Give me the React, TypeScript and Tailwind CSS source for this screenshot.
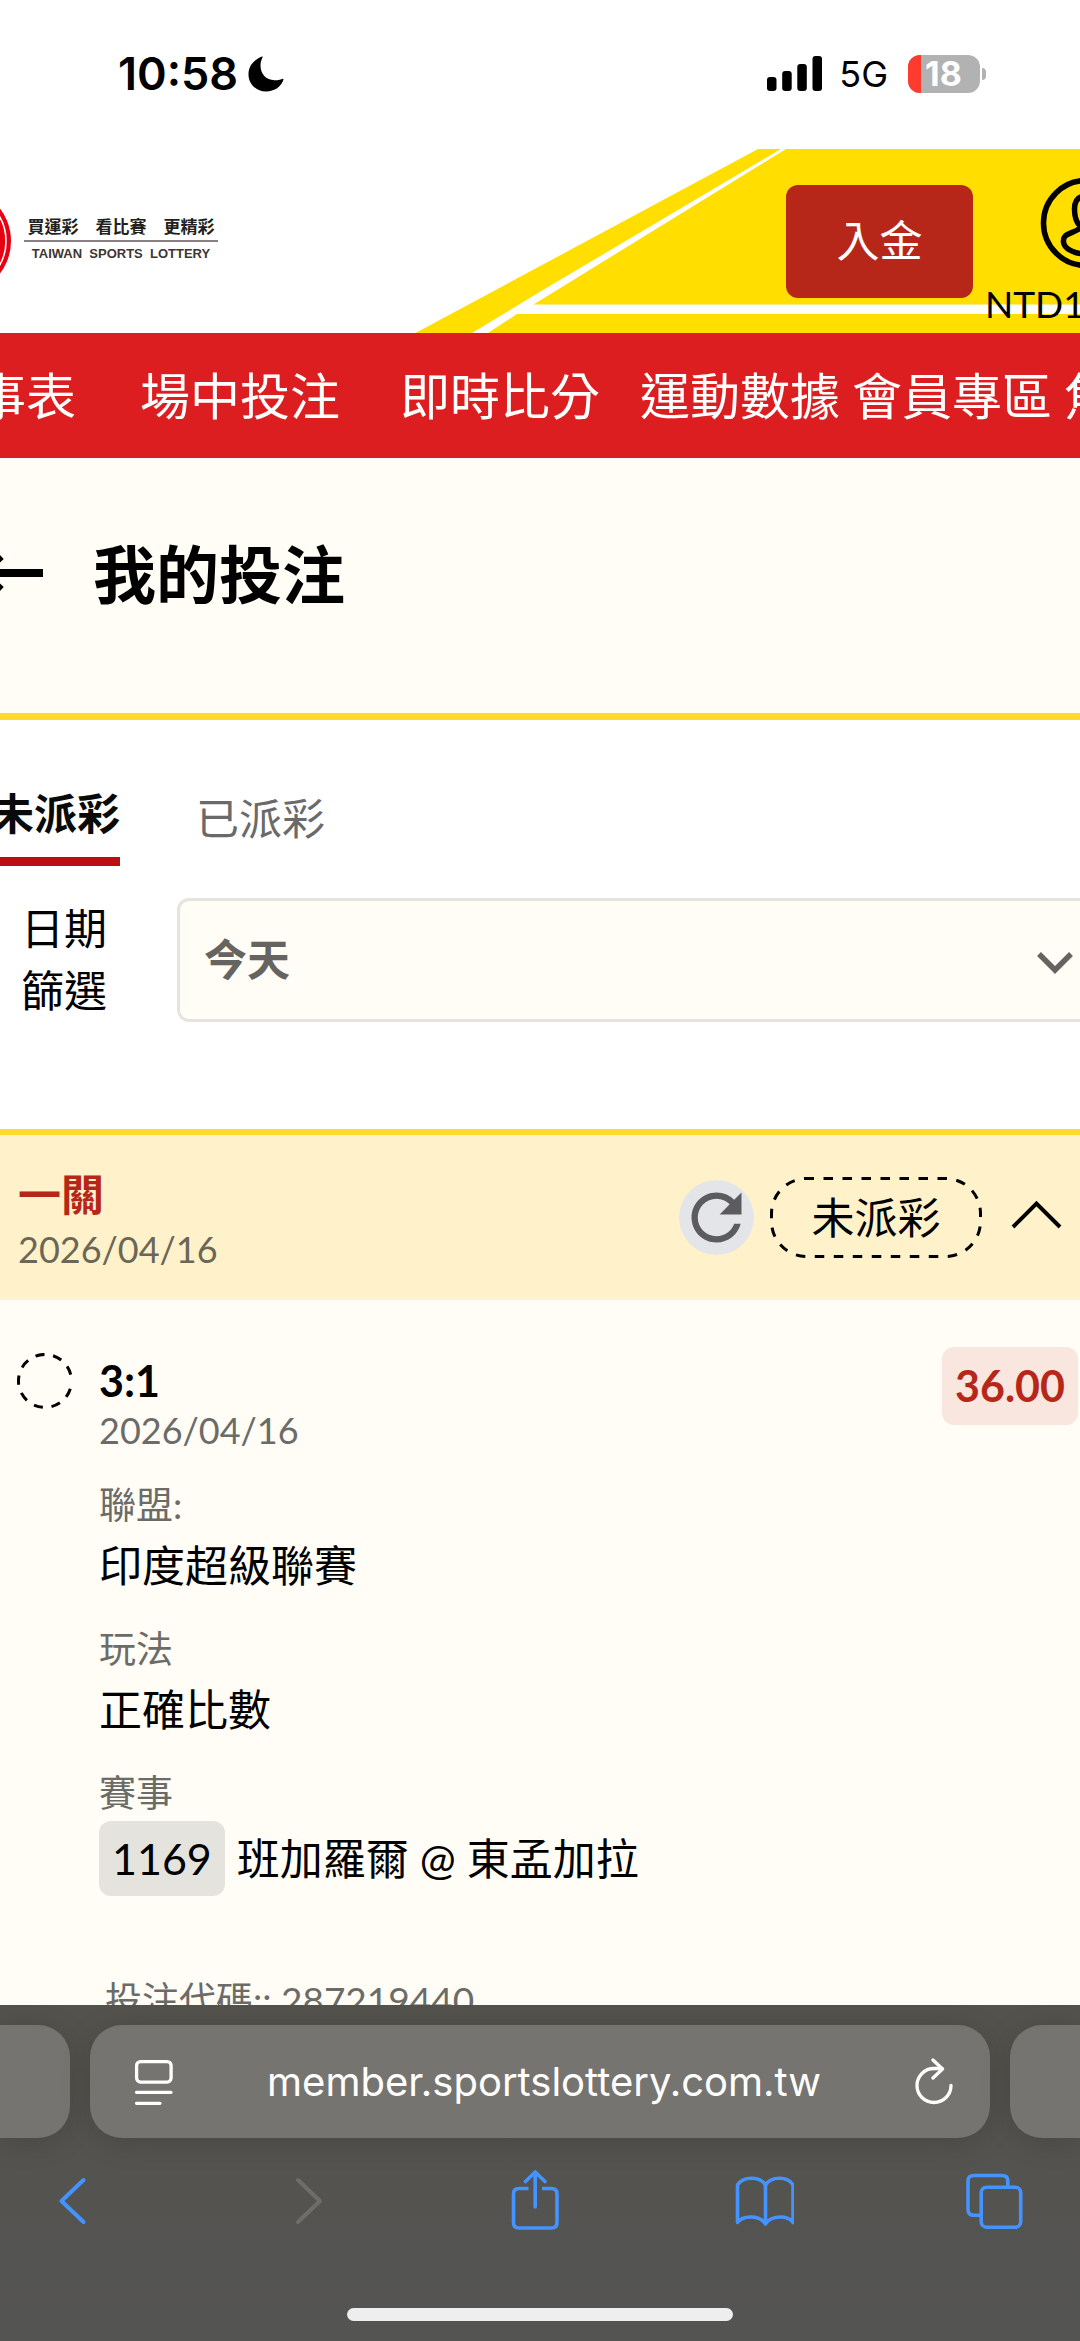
import type { ReactNode } from 'react';
import { MdRefresh } from 'react-icons/md';

const navItems = [
  { label: '事表', className: 'mr-16' },
  { label: '場中投注', className: 'mr-15' },
  { label: '即時比分', className: 'mr-10' },
  { label: '運動數據', className: 'mr-3' },
  { label: '會員專區', className: 'mr-3' },
  { label: '焦', className: '' },
];

const StatusBar = () => (
  <div className="flex h-[149px] items-start justify-between pt-[50px] pl-[118px] pr-[94px] font-['Inter',sans-serif] text-black">
    <div className="flex h-12 items-center gap-[10px]">
      <span className="text-[45px] leading-[48px] font-semibold">10:58</span>
      <svg className="h-9 w-9" viewBox="0 0 36 36" fill="currentColor">
        <path d="M14 0.500C6 3.500 0.500 10 0.500 18.500C0.500 28 8 35.500 18 35.500C26.500 35.500 33.500 30.500 35.500 23.500C35.600 22.800 35 22.600 34.300 22.900C31.500 24 29 24.300 26.500 24.200C18 24 12.500 18 12.500 9.500C12.500 6.500 13.200 4 14.500 1.400C14.800 0.800 14.600 0.300 14 0.500Z" />
      </svg>
    </div>
    <div className="flex h-12 items-center">
      <svg className="mr-4 h-9 w-14" viewBox="0 0 56 36" fill="currentColor">
        <rect x="0" y="21" width="9.500" height="14" rx="3" />
        <rect x="15.200" y="15" width="9.500" height="20" rx="3" />
        <rect x="30.300" y="8" width="9.500" height="27" rx="3" />
        <rect x="45.500" y="0" width="9.500" height="35" rx="3" />
      </svg>
      <span className="mr-5 text-[36px] leading-[48px]">5G</span>
      <div className="flex items-center gap-[2px]">
        <div className="flex h-[38px] w-[72px] items-center gap-1 rounded-xl bg-[#b2b2b2]">
          <div className="h-full w-[13px] rounded-l-xl bg-[#ff3b30]" />
          <span className="text-[34px] leading-[38px] font-bold text-white">18</span>
        </div>
        <div className="h-3 w-1 rounded-r-full bg-[#b2b2b2]" />
      </div>
    </div>
  </div>
);

const SiteHeader = () => (
  <header className="relative flex h-[184px] items-start overflow-hidden bg-white">
    <svg className="absolute top-0 right-0 h-full w-[665px]" viewBox="0 0 665 184" preserveAspectRatio="none" fill="#ffde00">
      <path d="M0.500 184L343 0H366L125 142.700L57 184Z" />
      <path d="M118.500 155.500L371 0H665V155.500Z" />
      <path d="M73 184L102 165H665V184Z" />
    </svg>
    <a href="#home" className="relative mt-[38px] flex items-center gap-3">
      <svg className="h-[108px] w-3" viewBox="0 0 12 108">
        <circle cx="-42.500" cy="54" r="53.500" fill="#e60012" />
        <circle cx="-42.500" cy="54" r="48.500" fill="none" stroke="#fff" strokeWidth="1.600" />
      </svg>
      <div className="flex w-[194px] flex-col items-center pb-1">
        <span className="font-['Noto_Sans_CJK_TC',sans-serif] text-[17px] leading-7 font-bold whitespace-nowrap text-[#231f20]">買運彩　看比賽　更精彩</span>
        <div className="h-[2px] w-full bg-[#8a8083]" />
        <span className="font-['Liberation_Sans',sans-serif] text-[13px] leading-6 font-bold whitespace-pre text-[#3e3634]">TAIWAN  SPORTS  LOTTERY</span>
      </div>
    </a>
    <button className="relative mt-9 ml-auto h-[113px] w-[187px] rounded-xl bg-[#b72719] text-[43px] text-white">入金</button>
    <a href="#account" className="relative mt-7 ml-3 w-[95px]">
      <svg className="ml-auto h-[92px] w-10" viewBox="0 0 40 92" fill="none" stroke="#000" strokeWidth="5.500" strokeLinejoin="round">
        <circle cx="46" cy="46" r="42.500" />
        <path d="M46 19C37 19 34.500 25 34.500 32C34.500 40 37 46 40 49C40 52 38 53 33 55C26 58 23 59 23.500 65C24 72 35 77 46 77" />
      </svg>
      <span className="block pt-3 text-[37px] leading-[46px] whitespace-nowrap text-black">NTD1</span>
    </a>
  </header>
);

const DetailItem = ({ label, children }: { label: string; children: ReactNode }) => (
  <div className="pb-[23px]">
    <dt className="text-[37px] leading-[56px] text-[#6b6b68]">{label}</dt>
    <dd className="text-[43px] leading-[65px] text-black">{children}</dd>
  </div>
);

const BetCard = () => (
  <section className="border-t-6 border-[#ffd92b]">
    <div className="flex h-[165px] items-center bg-[#fff2cb] pl-[18px] pr-4">
      <div className="flex-1">
        <h2 className="text-[43px] leading-[62px] font-bold text-[#b72719]">一關</h2>
        <p className="text-[36px] leading-[46px] text-[#6b6757]">2026/04/16</p>
      </div>
      <button aria-label="重新整理" className="mr-4 flex h-[75px] w-[75px] items-center justify-center rounded-full bg-[#e4e5e8]">
        <MdRefresh className="h-[75px] w-[75px] text-[#5c5c5e]" />
      </button>
      <div className="relative mr-7 flex h-[81px] w-[212px] items-center justify-center">
        <svg className="absolute inset-0 h-full w-full" viewBox="0 0 212 81" fill="none" stroke="#000" strokeWidth="3">
          <rect x="1.500" y="1.500" width="209" height="78" rx="35" strokeDasharray="9.500 9.500" strokeDashoffset="2" />
        </svg>
        <span className="text-[43px] leading-[62px] text-black">未派彩</span>
      </div>
      <button aria-label="收合">
        <svg className="h-[54px] w-[54px]" viewBox="0 0 54 54" fill="none" stroke="#000" strokeWidth="4">
          <path d="M3 36L26.500 12.500L50 36" />
        </svg>
      </button>
    </div>

    <div className="flex items-start pt-[47px] pl-[17px] pr-[2px]">
      <svg className="mt-[6px] mr-[26px] h-14 w-14" viewBox="0 0 56 56" fill="none" stroke="#000" strokeWidth="3">
        <path d="M53.300 35.700A26.500 26.500 0 1 1 53.700 21.600" strokeDasharray="9.200 8.650" />
      </svg>
      <div className="flex-1">
        <div className="flex items-start justify-between">
          <div>
            <h3 className="pt-2 text-[43px] leading-[52px] font-bold text-black">3:1</h3>
            <p className="text-[36px] leading-[46px] text-[#6b6b68]">2026/04/16</p>
          </div>
          <span className="rounded-xl bg-[#f8e6df] px-[13px] text-[43px] leading-[78px] font-bold text-[#b72719]">36.00</span>
        </div>
        <dl className="pt-6">
          <DetailItem label="聯盟:">印度超級聯賽</DetailItem>
          <DetailItem label="玩法">正確比數</DetailItem>
          <DetailItem label="賽事">
            <span className="flex items-center gap-3">
              <span className="rounded-xl bg-[#e5e3de] px-[13px] leading-[75px]">1169</span>
              <span className="leading-[75px]">班加羅爾 @ 東孟加拉</span>
            </span>
          </DetailItem>
        </dl>
        <p className="pt-13 pl-[6px] text-[37px] leading-[57px] text-[#6b6b68]">投注代碼:: 287219440</p>
      </div>
    </div>
  </section>
);

const BrowserBar = () => (
  <footer className="relative h-[336px] bg-linear-to-b from-[#53524c] to-[#545453] font-['Inter',sans-serif]">
    <div className="flex gap-5 pt-5">
      <div className="h-[113px] w-[70px] rounded-r-[32px] bg-[#757470] shadow-[0_4px_30px_rgba(0,0,0,0.15)]" />
      <div className="flex h-[113px] flex-1 items-center justify-between rounded-[32px] bg-[#757470] pr-9 pl-11 text-white shadow-[0_4px_30px_rgba(0,0,0,0.15)]">
        <button aria-label="Page menu">
          <svg className="h-12 w-10" viewBox="0 0 40 48" fill="none" stroke="currentColor" strokeWidth="3.300" strokeLinecap="round">
            <rect x="2.600" y="3.600" width="34.500" height="20.500" rx="4" />
            <path d="M2.500 34.300H37M2.500 45.300H26" />
          </svg>
        </button>
        <span className="text-[40px] leading-[48px]">member.sportslottery.com.tw</span>
        <button aria-label="Reload">
          <svg className="h-12 w-10" viewBox="0 0 40 48" fill="none" stroke="currentColor" strokeWidth="3.300" strokeLinecap="round" strokeLinejoin="round">
            <path d="M37 27.500A17 17 0 1 1 20 10.500H28" />
            <path d="M19 2L28.500 11L19 20" />
          </svg>
        </button>
      </div>
      <div className="h-[113px] w-[70px] rounded-l-[32px] bg-[#757470] shadow-[0_4px_30px_rgba(0,0,0,0.15)]" />
    </div>
    <div className="flex justify-between pt-8 pr-14 pl-[42px] text-[#4593ff]">
      <button aria-label="Back">
        <svg className="h-[60px] w-[60px]" viewBox="0 0 60 60" fill="none" stroke="currentColor" strokeWidth="4" strokeLinecap="round" strokeLinejoin="round">
          <path d="M41.500 10L19.500 31L41.500 52" />
        </svg>
      </button>
      <button aria-label="Forward" disabled>
        <svg className="h-[60px] w-[60px] text-[#6e6d69]" viewBox="0 0 60 60" fill="none" stroke="currentColor" strokeWidth="4" strokeLinecap="round" strokeLinejoin="round">
          <path d="M25 10L47 31L25 52" />
        </svg>
      </button>
      <button aria-label="Share">
        <svg className="h-[60px] w-[60px]" viewBox="0 0 60 60" fill="none" stroke="currentColor" strokeWidth="3.600" strokeLinecap="round" strokeLinejoin="round">
          <path d="M25.500 18.500H16Q10.500 18.500 10.500 24V52.500Q10.500 58 16 58H48.500Q54 58 54 52.500V24Q54 18.500 48.500 18.500H39" strokeLinecap="butt" />
          <path d="M32.200 37V2.500M22.500 11.500L32.200 2L42 11.500" />
        </svg>
      </button>
      <button aria-label="Bookmarks">
        <svg className="h-[60px] w-[60px]" viewBox="0 0 60 60" fill="none" stroke="currentColor" strokeWidth="3.600" strokeLinecap="round" strokeLinejoin="round">
          <path d="M31.500 15C26 6 9 6 3.500 15V52.500C9 45 26 45 31.500 54C37 45 54 45 59 52.500V15C54 6 37 6 31.500 15V54" />
        </svg>
      </button>
      <button aria-label="Tabs">
        <svg className="h-[60px] w-[60px]" viewBox="0 0 60 60" fill="none" stroke="currentColor" strokeWidth="3.600">
          <path d="M17 45.300H10Q4 45.300 4 39.500V11Q4 5.500 10 5.500H38Q43.800 5.500 43.800 11V18" />
          <rect x="17.200" y="17.200" width="39.500" height="40" rx="5.500" />
        </svg>
      </button>
    </div>
    <div className="absolute bottom-5 left-1/2 h-[13px] w-[386px] -translate-x-1/2 rounded-full bg-[#eeeeee]" />
  </footer>
);

export default function App() {
  return (
    <div className="flex h-screen flex-col overflow-hidden bg-white font-['Lato','Noto_Sans_CJK_TC',sans-serif]">
      <StatusBar />
      <SiteHeader />
      <nav className="-ml-6 flex h-[125px] shrink-0 items-center overflow-hidden bg-[#dd1e20] text-[50px] leading-[72px] whitespace-nowrap text-white">
        {navItems.map((item) => (
          <a key={item.label} href="#nav" className={`shrink-0 ${item.className}`}>
            {item.label}
          </a>
        ))}
      </nav>

      <main className="min-h-0 flex-1 overflow-hidden bg-[#fffdf5]">
        {/* Page title */}
        <div className="flex h-[262px] items-start gap-[50px] border-b-7 border-[#ffd92b] pt-[72px]">
          <button aria-label="返回">
            <svg className="h-[90px] w-[43px]" viewBox="0 0 43 90" fill="none" stroke="#000" strokeWidth="8">
              <path d="M43 43H-17M1 26L-17 43L1 60" />
            </svg>
          </button>
          <h1 className="text-[63px] leading-[88px] font-bold text-black">我的投注</h1>
        </div>

        {/* Tabs and date filter */}
        <div className="h-[409px] bg-white pt-[63px]">
          <div className="-ml-[9px] flex items-start gap-[76px]">
            <button className="border-b-9 border-[#bb1013] pb-3 text-[43px] leading-[62px] font-bold text-[#0a0a0a]">未派彩</button>
            <button className="pt-[5px] text-[43px] leading-[62px] text-[#6a6a6a]">已派彩</button>
          </div>
          <div className="flex items-start pt-8 pl-[21px]">
            <label htmlFor="date-filter" className="mr-[70px] w-[86px] text-[43px] leading-[62px] text-black">日期篩選</label>
            <div className="relative -mr-3 flex-1">
              <select id="date-filter" className="h-[124px] w-full appearance-none rounded-xl border-3 border-[#e6e4dc] bg-[#fffdf5] px-6 text-[43px] font-bold text-[#666460]">
                <option>今天</option>
              </select>
              <svg className="pointer-events-none absolute top-1/2 right-4 h-10 w-10 -translate-y-1/2" viewBox="0 0 40 40" fill="none" stroke="#666460" strokeWidth="5.500">
                <path d="M3 14L19 30L35 14" />
              </svg>
            </div>
          </div>
        </div>

        <BetCard />
      </main>

      <BrowserBar />
    </div>
  );
}
